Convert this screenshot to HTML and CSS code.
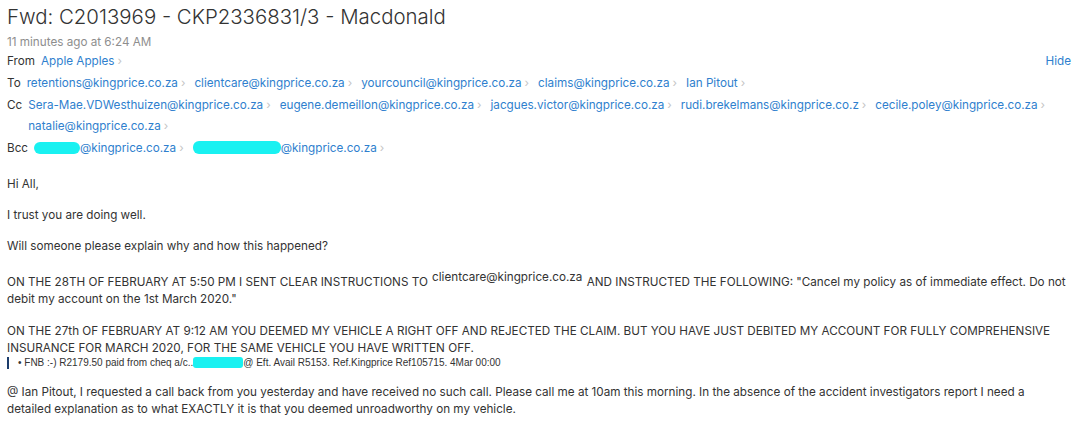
FILE: index.html
```html
<!DOCTYPE html>
<html lang="en">
<head>
<meta charset="UTF-8">
<meta name="viewport" content="width=device-width, initial-scale=1.0">
<title>Fwd: C2013969 - CKP2336831/3 - Macdonald</title>
<link rel="stylesheet" href="styles.css">
</head>
<body>
<div class="message">
    <h1 class="subject">Fwd: C2013969 - CKP2336831/3 - Macdonald</h1>
    <div class="sent">11 minutes ago at 6:24 AM</div>

    <div class="headers">
        <div class="header-row">
            <span class="label">From</span>
            <div class="addresses">
                <span class="addr">Apple Apples</span>
            </div>
            <a class="hide">Hide</a>
        </div>
        <div class="header-row">
            <span class="label">To</span>
            <div class="addresses">
                <span class="addr">retentions@kingprice.co.za</span>
                <span class="addr">clientcare@kingprice.co.za</span>
                <span class="addr">yourcouncil@kingprice.co.za</span>
                <span class="addr">claims@kingprice.co.za</span>
                <span class="addr">Ian Pitout</span>
            </div>
        </div>
        <div class="header-row">
            <span class="label">Cc</span>
            <div class="addresses">
                <span class="addr">Sera-Mae.VDWesthuizen@kingprice.co.za</span>
                <span class="addr">eugene.demeillon@kingprice.co.za</span>
                <span class="addr">jacgues.victor@kingprice.co.za</span>
                <span class="addr">rudi.brekelmans@kingprice.co.z</span>
                <span class="addr">cecile.poley@kingprice.co.za</span>
                <span class="addr">natalie@kingprice.co.za</span>
            </div>
        </div>
        <div class="header-row">
            <span class="label">Bcc</span>
            <div class="addresses">
                <span class="addr"><span class="redact redact-short"></span>@kingprice.co.za</span>
                <span class="addr"><span class="redact redact-long"></span>@kingprice.co.za</span>
            </div>
        </div>
    </div>

    <div class="body">
        <p>Hi All,</p>
        <p>I trust you are doing well.</p>
        <p>Will someone please explain why and how this happened?</p>
        <p class="instructions">ON THE 28TH OF FEBRUARY AT 5:50 PM I SENT CLEAR INSTRUCTIONS TO <span class="raised">clientcare@kingprice.co.za</span> AND INSTRUCTED THE FOLLOWING: "Cancel my policy as of immediate effect. Do not debit my account on the 1st March 2020."</p>
        <p class="tight">ON THE 27th OF FEBRUARY AT 9:12 AM YOU DEEMED MY VEHICLE A RIGHT OFF AND REJECTED THE CLAIM. BUT YOU HAVE JUST DEBITED MY ACCOUNT FOR FULLY COMPREHENSIVE INSURANCE FOR MARCH 2020, FOR THE SAME VEHICLE YOU HAVE WRITTEN OFF.</p>
        <blockquote class="quote">&bull; FNB :-) R2179.50 paid from cheq a/c..<span class="redact redact-acc"></span>@ Eft. Avail R5153. Ref.Kingprice Ref105715. 4Mar 00:00</blockquote>
        <p>@ Ian Pitout, I requested a call back from you yesterday and have received no such call. Please call me at 10am this morning. In the absence of the accident investigators report I need a detailed explanation as to what EXACTLY it is that you deemed unroadworthy on my vehicle.</p>
    </div>
</div>
</body>
</html>
```

FILE: styles.css
```css
body {
    margin: 0;
    background-color: #fff;
    font-family: Inter, "Noto Sans", sans-serif;
    color: #333;
}
.message {
    padding: 4px 13px 0 7px;
}
.subject {
    margin: 0;
    font-size: 20.4px;
    font-weight: 300;
    line-height: 26px;
    color: #333;
}
.sent {
    font-size: 11.7px;
    line-height: 18px;
    color: #8e8e8e;
    margin-top: 3px;
}
.headers {
    font-size: 11.7px;
}
.header-row {
    display: flex;
    align-items: flex-start;
    line-height: 21.75px;
}
.label {
    color: #333;
    margin-right: 6px;
}
.addresses {
    display: flex;
    flex-wrap: wrap;
    flex: 1;
}
.addr {
    color: #2f7fce;
    margin-right: 9px;
    white-space: nowrap;
}
.addr::after {
    content: "\203A";
    color: #c4c4c4;
    margin-left: 3px;
}
.hide {
    color: #2f7fce;
}
.redact {
    display: inline-block;
    background-color: #19f1f1;
    border-radius: 6px;
    vertical-align: -2px;
}
.redact-short {
    width: 46px;
    height: 12px;
}
.redact-long {
    width: 88px;
    height: 13px;
}
.redact-acc {
    width: 50px;
    height: 11px;
    border-radius: 3px;
    vertical-align: -2px;
}
.body {
    font-size: 11.7px;
    line-height: 17px;
    margin-top: 16px;
    padding-right: 2px;
}
.body p {
    margin: 0 0 14px;
}
.body p.instructions {
    margin-bottom: 15px;
}
.body p.tight {
    margin-bottom: 0;
}
.raised {
    display: inline-block;
    line-height: 17px;
    vertical-align: 5px;
    margin: 0 1px;
}
.quote {
    margin: 0 0 15px;
    padding-left: 9px;
    border-left: 2px solid #1c3c6b;
    font-family: "Liberation Sans", Arial, sans-serif;
    font-size: 10px;
    line-height: 12px;
    color: #333;
}
```
